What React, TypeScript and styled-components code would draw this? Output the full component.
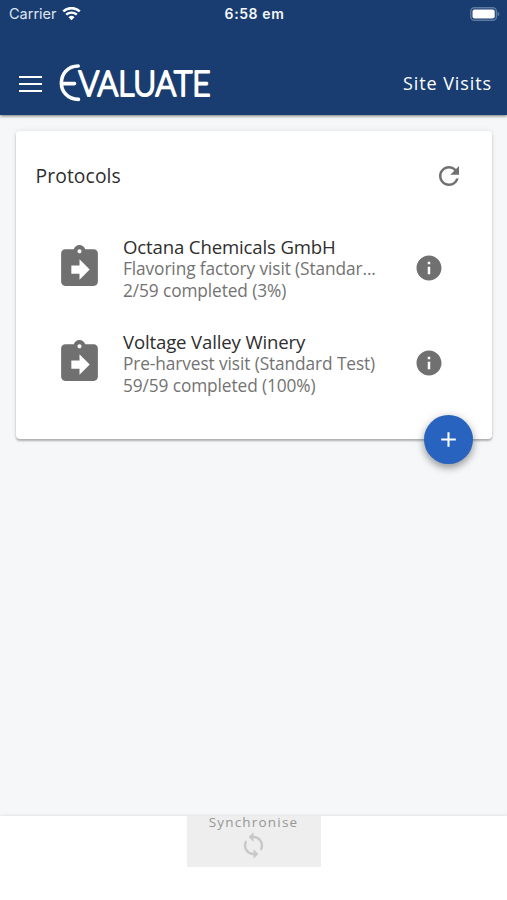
import React from 'react';
import styled, { createGlobalStyle } from 'styled-components';
import { MdAdd, MdAssignmentReturn, MdInfo, MdRefresh, MdSync } from 'react-icons/md';

const GlobalStyle = createGlobalStyle`
  * { box-sizing: border-box; }
  body { margin: 0; background: #f5f7f9; }
  button { font: inherit; border: 0; padding: 0; margin: 0; background: none; }
`;

const Screen = styled.div`
  width: 507px;
  height: 900px;
  display: flex;
  flex-direction: column;
  overflow: hidden;
  background: #f5f7f9;
  color: #2e2e2e;
  font-family: 'Open Sans', 'Noto Sans', sans-serif;
`;

const Header = styled.header`
  flex: none;
  height: 115px;
  background: #193d70;
  color: #fff;
  box-shadow: 0 1px 3px rgba(0, 0, 0, 0.55);
`;

const StatusBar = styled.div`
  height: 28px;
  padding: 0 7px 0 9px;
  display: grid;
  grid-template-columns: 1fr auto 1fr;
  align-items: center;
  font: 14.5px/28px Inter, sans-serif;
  color: #dfe7f2;
`;

const Carrier = styled.div`
  display: flex;
  align-items: center;
  gap: 5px;
  letter-spacing: 0;
`;

const Clock = styled.div`
  font-size: 14px;
  font-weight: 600;
  letter-spacing: 0.6px;
  color: #f4f7fb;
`;

const BatterySlot = styled.div`
  display: flex;
  justify-content: flex-end;
`;

const Toolbar = styled.div`
  height: 87px;
  padding: 22px 15px 0 19px;
  display: flex;
  align-items: center;
`;

const MenuButton = styled.button`
  width: 23px;
  height: 16px;
  display: flex;
  flex-direction: column;
  justify-content: space-between;
  margin-top: 2px;
`;

const MenuLine = styled.span`
  height: 2px;
  width: 100%;
  background: #fff;
`;

const Logo = styled.svg`
  margin-left: 16px;
  display: block;
  overflow: visible;
`;

const LogoText = styled.text`
  font: 300 35px Lato, sans-serif;
  fill: #fff;
  stroke: #fff;
  stroke-width: 2.2;
  stroke-linejoin: round;
`;

const PageName = styled.div`
  margin-left: auto;
  font-size: 18px;
  letter-spacing: 0.9px;
  line-height: 26px;
`;

const Content = styled.main`
  flex: 1;
  padding: 16px 15px 0 16px;
`;

const Card = styled.section`
  position: relative;
  height: 308px;
  border-radius: 4px;
  background: #fff;
  box-shadow: 0 2px 2px rgba(0, 0, 0, 0.26), 0 0 5px rgba(0, 0, 0, 0.1);
`;

const CardHeader = styled.div`
  height: 89px;
  padding: 0 28.5px 0 19.5px;
  display: flex;
  align-items: center;
  justify-content: space-between;
`;

const CardTitle = styled.h1`
  margin: 0;
  font-size: 19.3px;
  font-weight: 400;
  line-height: 26px;
  letter-spacing: 0.1px;
`;

const IconButton = styled.button`
  display: flex;
  color: #707070;
`;

const ProtocolList = styled.ul`
  list-style: none;
  margin: 0;
  padding: 0;
`;

const ProtocolRow = styled.li`
  height: 95px;
  padding: 0 48px 0 39px;
  display: flex;
  align-items: center;
`;

const ClipboardIcon = styled(MdAssignmentReturn)`
  flex: none;
  transform: scaleX(-1);
  color: #707070;
`;

const ProtocolText = styled.div`
  width: 254px;
  margin-left: 19px;
  margin-right: auto;
  padding-top: 1px;
`;

const ProtocolName = styled.div`
  font-size: 18.6px;
  letter-spacing: -0.15px;
  line-height: 23px;
  white-space: nowrap;
`;

const ProtocolDetail = styled.div`
  font-size: 17.3px;
  letter-spacing: -0.1px;
  line-height: 22px;
  color: #737373;
  white-space: nowrap;
`;

const AddButton = styled.button`
  position: absolute;
  right: 19px;
  bottom: -25px;
  width: 49px;
  height: 49px;
  border-radius: 50%;
  display: flex;
  align-items: center;
  justify-content: center;
  background: #2763bf;
  color: #fff;
  box-shadow: 0 4px 7px rgba(0, 0, 0, 0.3), 0 1px 12px rgba(0, 0, 0, 0.14);
`;

const Footer = styled.footer`
  flex: none;
  height: 84px;
  display: flex;
  justify-content: center;
  align-items: flex-start;
  background: #fff;
  box-shadow: 0 0 4px rgba(0, 0, 0, 0.13);
`;

const SyncButton = styled.button`
  width: 134px;
  height: 51px;
  display: flex;
  flex-direction: column;
  align-items: center;
  background: #eee;
  color: #c8c8c8;
`;

const SyncLabel = styled.span`
  height: 15px;
  font-size: 13.5px;
  font-weight: 500;
  line-height: 12px;
  letter-spacing: 1.2px;
  color: #969696;
`;

const protocols = [
  {
    name: 'Octana Chemicals GmbH',
    visit: 'Flavoring factory visit (Standar...',
    progress: '2/59 completed (3%)',
  },
  {
    name: 'Voltage Valley Winery',
    visit: 'Pre-harvest visit (Standard Test)',
    progress: '59/59 completed (100%)',
  },
];

function WifiIcon() {
  return (
    <svg width="19" height="15" viewBox="0 0 19 15" fill="none" stroke="#fff">
      <path d="M1.2 4.4a12.2 12.2 0 0 1 16.6 0" strokeWidth="2.6" />
      <path d="M4.2 7.7a7.8 7.8 0 0 1 10.6 0" strokeWidth="2.4" />
      <path d="M9.5 13.2 6.5 10.2a4.3 4.3 0 0 1 6 0z" fill="#fff" stroke="none" />
    </svg>
  );
}

function BatteryIcon() {
  return (
    <svg width="30" height="15" viewBox="0 0 30 15">
      <rect x="0.8" y="0.7" width="25.6" height="12.6" rx="3.6" fill="none" stroke="#5f7ba2" strokeWidth="1.4" />
      <rect x="2.5" y="2.4" width="22.2" height="9.2" rx="2" fill="#fff" />
      <path d="M27.6 4.8q1.8.5 1.8 2.2t-1.8 2.2z" fill="#5f7ba2" />
    </svg>
  );
}

function EvaluateLogo() {
  return (
    <Logo width="160" height="44" viewBox="0 -2 160 44" role="img" aria-label="Evaluate">
      <g fill="none" stroke="#fff" strokeWidth="3.6" strokeLinecap="round">
        <path d="M20.2 3C9 3.2 3.4 11.5 3.4 20S9.5 36.2 20.5 36.4" />
        <path d="M4 20.6h12.5" />
      </g>
      <LogoText x="20.5" y="33" textLength="132" lengthAdjust="spacingAndGlyphs">
        VALUATE
      </LogoText>
    </Logo>
  );
}

export default function App() {
  return (
    <>
      <GlobalStyle />
      <Screen>
        <Header>
          <StatusBar>
            <Carrier>
              Carrier
              <WifiIcon />
            </Carrier>
            <Clock>6:58 em</Clock>
            <BatterySlot>
              <BatteryIcon />
            </BatterySlot>
          </StatusBar>
          <Toolbar>
            <MenuButton aria-label="Menu">
              <MenuLine />
              <MenuLine />
              <MenuLine />
            </MenuButton>
            <EvaluateLogo />
            <PageName>Site Visits</PageName>
          </Toolbar>
        </Header>
        <Content>
          <Card>
            <CardHeader>
              <CardTitle>Protocols</CardTitle>
              <IconButton aria-label="Refresh">
                <MdRefresh size={30} />
              </IconButton>
            </CardHeader>
            <ProtocolList>
              {protocols.map((protocol) => (
                <ProtocolRow key={protocol.name}>
                  <ClipboardIcon size={49} />
                  <ProtocolText>
                    <ProtocolName>{protocol.name}</ProtocolName>
                    <ProtocolDetail>{protocol.visit}</ProtocolDetail>
                    <ProtocolDetail>{protocol.progress}</ProtocolDetail>
                  </ProtocolText>
                  <IconButton aria-label="Details">
                    <MdInfo size={30} />
                  </IconButton>
                </ProtocolRow>
              ))}
            </ProtocolList>
            <AddButton aria-label="Add protocol">
              <MdAdd size={25} />
            </AddButton>
          </Card>
        </Content>
        <Footer>
          <SyncButton>
            <SyncLabel>Synchronise</SyncLabel>
            <MdSync size={29} />
          </SyncButton>
        </Footer>
      </Screen>
    </>
  );
}
